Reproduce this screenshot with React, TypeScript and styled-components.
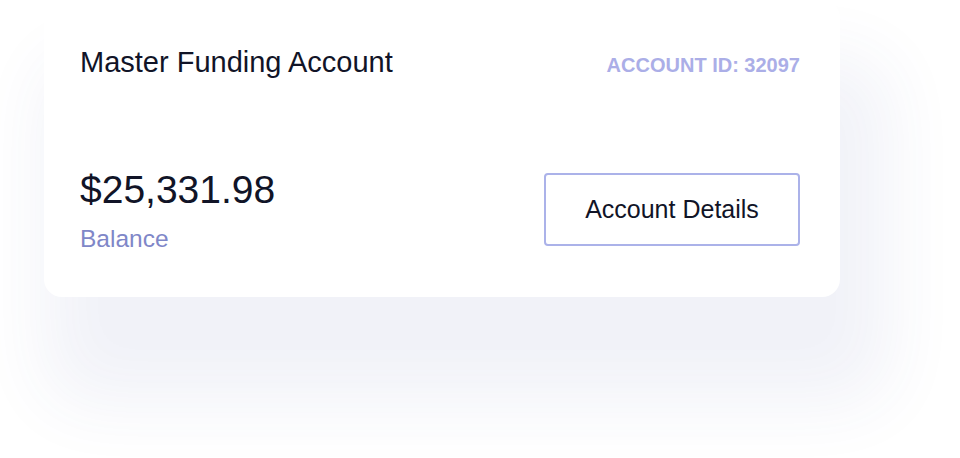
import React from "react";
import styled, { createGlobalStyle } from "styled-components";

const GlobalStyle = createGlobalStyle`
  html, body {
    margin: 0;
    padding: 0;
    background: #ffffff;
    font-family: "Liberation Sans", Arial, sans-serif;
  }
`;

const Page = styled.div`
  width: 960px;
  height: 458px;
  padding-left: 44px;
  box-sizing: border-box;
  overflow: hidden;
`;

const Card = styled.div`
  width: 796px;
  height: 297px;
  box-sizing: border-box;
  padding: 45px 40px 44px 36px;
  background: #ffffff;
  border-radius: 18px;
  box-shadow: 25px 82px 70px 24px rgba(50, 70, 160, 0.07);
  display: flex;
  flex-direction: column;
  justify-content: space-between;
`;

const Row = styled.div<{ $align: string }>`
  display: flex;
  justify-content: space-between;
  align-items: ${(p) => p.$align};
`;

const Title = styled.div`
  font-size: 29px;
  line-height: 1.2;
  color: #111427;
`;

const AccountId = styled.div`
  font-size: 20px;
  line-height: 1.2;
  font-weight: 700;
  color: #abaee7;
`;

const BalanceBlock = styled.div`
  display: flex;
  flex-direction: column;
  gap: 10px;
`;

const Amount = styled.div`
  font-size: 39px;
  line-height: 1.2;
  color: #111427;
`;

const Label = styled.div`
  font-size: 24.5px;
  line-height: 1.2;
  color: #7f87c8;
`;

const DetailsButton = styled.button`
  width: 256px;
  height: 73px;
  box-sizing: border-box;
  border: 2px solid #abb2e9;
  border-radius: 4px;
  background: #ffffff;
  font-family: "Liberation Sans", Arial, sans-serif;
  font-size: 25px;
  color: #111427;
  cursor: pointer;
`;

const App = () => {
  return (
    <Page>
      <GlobalStyle />
      <Card>
        <Row $align="baseline">
          <Title>Master Funding Account</Title>
          <AccountId>ACCOUNT ID: 32097</AccountId>
        </Row>
        <Row $align="center">
          <BalanceBlock>
            <Amount>$25,331.98</Amount>
            <Label>Balance</Label>
          </BalanceBlock>
          <DetailsButton>Account Details</DetailsButton>
        </Row>
      </Card>
    </Page>
  );
};

export default App;
